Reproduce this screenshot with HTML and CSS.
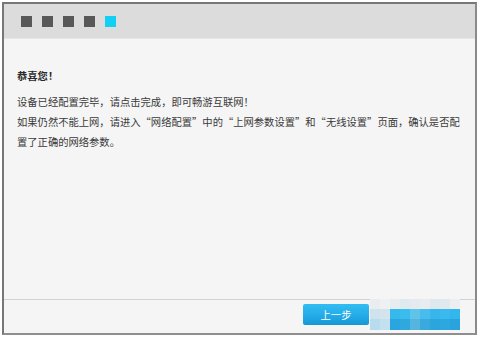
FILE: index.html
```html
<!DOCTYPE html>
<html lang="zh-CN">
<head>
<meta charset="utf-8">
<link rel="stylesheet" href="styles.css">
</head>
<body>
<div class="frame">
  <div class="header">
    <span class="step"></span>
    <span class="step"></span>
    <span class="step"></span>
    <span class="step"></span>
    <span class="step active"></span>
  </div>
  <div class="content">
    <p class="title">恭喜您！</p>
    <p class="text">设备已经配置完毕，请点击完成，即可畅游互联网！</p>
    <p class="text">如果仍然不能上网，请进入“网络配置”中的“上网参数设置”和“无线设置”页面，确认是否配置了正确的网络参数。</p>
  </div>
  <div class="footer">
    <button class="btn">上一步</button>
    <span class="btn-hidden"></span>
  </div>
  <div class="mosaic">
    <i style="background:#e9edf0"></i><i style="background:#eef0f2"></i><i style="background:#e6ecf0"></i><i style="background:#dfe9f0"></i><i style="background:#e4eaee"></i><i style="background:#e8ecef"></i><i style="background:#dde8ef"></i><i style="background:#e2e9ee"></i><i style="background:#eceef0"></i>
    <i style="background:#cfe3ee"></i><i style="background:#d5e4ec"></i><i style="background:#35b8ec"></i><i style="background:#3bbcee"></i><i style="background:#5fc4ea"></i><i style="background:#46bdec"></i><i style="background:#38b6ea"></i><i style="background:#3ab9ee"></i><i style="background:#33b6ec"></i>
    <i style="background:#b8dcee"></i><i style="background:#c3e0ee"></i><i style="background:#2aa5df"></i><i style="background:#2fa8de"></i><i style="background:#55b5de"></i><i style="background:#3aaade"></i><i style="background:#2ba6dd"></i><i style="background:#2da7df"></i><i style="background:#2aa3dc"></i>
  </div>
</div>
</body>
</html>
```
FILE: styles.css
```css
html, body {
  margin: 0;
  padding: 0;
  background: #ffffff;
}
body {
  padding: 2px 0 0 2px;
  font-family: "Noto Sans CJK SC", "Noto Sans", sans-serif;
}
.frame {
  position: relative;
  box-sizing: border-box;
  width: 475px;
  height: 333px;
  border-top: 2px solid #777777;
  border-left: 2px solid #777777;
  border-right: 2px solid #8a8a8a;
  border-bottom: 2px solid #8f8f8f;
  background: #f5f5f5;
  display: flex;
  flex-direction: column;
}
.header {
  height: 35px;
  box-sizing: border-box;
  background: #dcdcdc;
  border-bottom: 1px solid #e6e6e6;
  display: flex;
  align-items: flex-start;
  gap: 10px;
  padding: 12px 0 0 17px;
}
.step {
  width: 11px;
  height: 11px;
  background: #585858;
}
.step.active {
  background: #12d0f4;
}
.content {
  flex: 1;
  padding: 27px 0 0 13px;
  width: 446px;
  font-size: 10.3px;
  line-height: 20px;
  color: #3a3a3a;
}
.content p {
  margin: 0;
}
.title {
  font-weight: bold;
  color: #2a2a2a;
  margin-bottom: 6px !important;
}
.footer {
  height: 29px;
  border-top: 1px solid #d2d2d2;
  display: flex;
  justify-content: flex-end;
  align-items: flex-start;
  gap: 1px;
  padding: 4px 15px 0 0;
}
.btn {
  width: 66px;
  height: 21px;
  border: none;
  border-radius: 2px;
  background: linear-gradient(#31bdf2 0%, #25aeea 50%, #1697d4 100%);
  color: #ffffff;
  font-family: "Noto Sans CJK SC", "Noto Sans", sans-serif;
  font-size: 10.3px;
  padding: 0;
}
.btn-hidden {
  width: 90px;
  height: 21px;
}
.mosaic {
  position: absolute;
  left: 366px;
  top: 295px;
  width: 90px;
  height: 31px;
  display: grid;
  grid-template-columns: repeat(9, 10px);
  grid-template-rows: 10px 10px 11px;
}
.mosaic i {
  display: block;
}
```
